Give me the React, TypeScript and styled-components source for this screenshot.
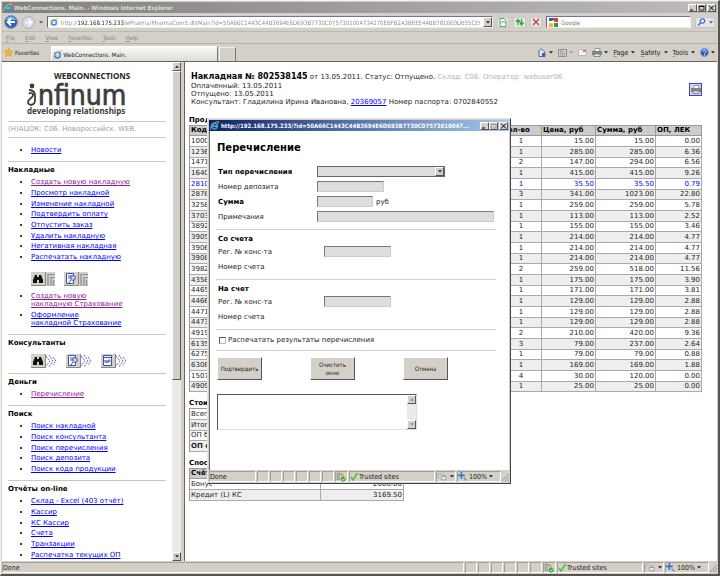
import React from "react";
import styled, { createGlobalStyle, css } from "styled-components";

const UI = `"DejaVu Sans Condensed", "DejaVu Sans", sans-serif`;
const BODY = `"DejaVu Sans", Verdana, sans-serif`;
const FACE = "#d4d0c8";

const Global = createGlobalStyle`
  * { box-sizing: border-box; }
  body { margin: 0; font-family: ${BODY}; font-size: 7px; color: #222; background: ${FACE}; }
  h1, h2, h3, p, ul { margin: 0; padding: 0; }
  button, input, select, textarea { font: inherit; margin: 0; padding: 0; border-radius: 0; }
  button { display: flex; align-items: center; justify-content: center; color: inherit; }
  svg { display: block; flex: none; }
`;

const raised = css`
  background: ${FACE};
  border: 1px solid;
  border-color: #fff #555 #555 #fff;
`;

/* ---------- window frame ---------- */

const Window = styled.div`
  position: relative;
  display: flex;
  flex-direction: column;
  height: 100vh;
  background: ${FACE};
  border: solid;
  border-width: 1px 2px 2px 1px;
  border-color: #f4f2ee #555 #555 #f4f2ee;
  padding: 1px;
  overflow: hidden;
`;

const TitleBar = styled.header<{ $active?: boolean }>`
  display: flex;
  align-items: center;
  gap: 2px;
  flex: none;
  height: 11px;
  padding: 0 1px;
  font-family: ${UI};
  font-weight: bold;
  color: ${(p) => (p.$active ? "#fff" : "#dedbd5")};
  background: ${(p) =>
    p.$active ? "linear-gradient(90deg, #0a246a, #a6caf0)" : "linear-gradient(90deg, #808080, #bcbcbc)"};
`;

const TitleText = styled.span`
  flex: 1;
  min-width: 0;
  overflow: hidden;
  white-space: nowrap;
  text-overflow: ellipsis;
  font-size: 6px;
`;

const Caption = styled.button`
  ${raised}
  width: 9px;
  height: 8px;
  color: #000;
`;

const CaptionGroup = styled.div`
  display: flex;
  & > :last-child { margin-left: 1px; }
`;

const IELogo = ({ size = 9 }: { size?: number }) => (
  <svg width={size} height={size} viewBox="0 0 16 16" aria-hidden="true">
    <circle cx="8" cy="9" r="5" fill="none" stroke="#2f8fe0" strokeWidth="3" />
    <path d="M5 9h8" stroke="#8fd0ff" strokeWidth="2" />
    <path d="M1 15C-1 11 7 2 15 1c1 1 0 3-1 4" fill="none" stroke="#f2b92c" strokeWidth="1.6" />
  </svg>
);

const Captions = ({ muted }: { muted?: boolean }) => (
  <CaptionGroup>
    <Caption aria-label="Minimize">
      <svg width="7" height="6" viewBox="0 0 7 6"><path d="M1 5h3" stroke="#000" /></svg>
    </Caption>
    <Caption aria-label="Maximize">
      <svg width="7" height="6" viewBox="0 0 7 6">
        <path d="M1 1h5v4H1zM1 1.5h5" fill="none" stroke={muted ? "#999" : "#000"} strokeWidth=".8" />
      </svg>
    </Caption>
    <Caption aria-label="Close">
      <svg width="7" height="6" viewBox="0 0 7 6"><path d="M1 .5l5 5M6 .5l-5 5" stroke="#000" /></svg>
    </Caption>
  </CaptionGroup>
);

const Caret = ({ color = "#222", up = false }: { color?: string; up?: boolean }) => (
  <svg width="4" height="3" viewBox="0 0 5 3" aria-hidden="true">
    <path d={up ? "M0 3h5L2.500.2z" : "M0 0h5L2.500 2.800z"} fill={color} />
  </svg>
);

/* ---------- toolbars ---------- */

const AddressRow = styled.div`
  display: flex;
  align-items: center;
  flex: none;
  height: 19px;
  padding: 0 2px;
  gap: 4px;
  border-bottom: 1px solid #bdb9b0;
`;

const NavButton = styled.button`
  border: 0;
  background: none;
`;

const Field = styled.div<{ $grow: number }>`
  display: flex;
  align-items: center;
  gap: 3px;
  flex: ${(p) => p.$grow} 1 0;
  min-width: 0;
  height: 12px;
  padding-left: 2px;
  background: #fff;
  border: 1px solid;
  border-color: #777 #eee #eee #666;
`;

const FieldInput = styled.input`
  flex: 1;
  min-width: 0;
  height: 10px;
  border: 0;
  outline: 0;
  background: transparent;
  font-family: ${UI};
  font-size: 6px;
  color: #777;
  &::placeholder { color: #777; opacity: 1; }
`;

const AddressInput = styled(FieldInput)`
  color: transparent;
  background: linear-gradient(90deg, #888 17px, #222 17px, #222 63px, #888 63px);
  background-clip: text;
  -webkit-background-clip: text;
`;

const DropButton = styled.button`
  ${raised}
  width: 9px;
  height: 100%;
  flex: none;
`;

const FlatButton = styled.button`
  height: 11px;
  min-width: 11px;
  padding: 0 1px;
  gap: 3px;
  background: #e8e6e1;
  border: 1px solid #c4c8cc;
`;

const MenuRow = styled.nav`
  display: flex;
  align-items: center;
  flex: none;
  height: 12px;
  padding-left: 4px;
  gap: 10px;
  color: #8a8782;
  border-bottom: 1px solid #b6b2a9;
`;

const PlainButton = styled.button<{ $compact?: boolean }>`
  border: 0;
  background: none;
  gap: ${(p) => (p.$compact ? 2 : 3)}px;
  font-family: ${UI};
  font-size: ${(p) => (p.$compact ? 6 : 7)}px;
  white-space: nowrap;
`;

const Mnemonic = styled.u`
  text-decoration-color: #999;
`;

const TabRow = styled.div`
  display: flex;
  align-items: center;
  flex: none;
  height: 18px;
  padding: 0 2px;
  border-bottom: 1px solid #666;
`;

const Tab = styled.button`
  align-self: flex-end;
  justify-content: flex-start;
  width: 167px;
  height: 15px;
  gap: 1px;
  margin-left: 12px;
  padding-left: 1px;
  font-family: ${UI};
  font-size: 6px;
  border: solid;
  border-width: 1px 1px 0;
  border-color: #fff #777 #fff #fff;
  background: linear-gradient(#fbfaf9, #dedbd5);
`;

const NewTab = styled.button`
  align-self: flex-end;
  width: 17px;
  height: 14px;
  margin-left: 1px;
  border: solid;
  border-width: 1px 1px 0;
  border-color: #eee #777 #eee #eee;
  background: ${FACE};
`;

const Commands = styled.div`
  display: flex;
  align-items: center;
  gap: 5px;
  margin-left: auto;
`;

/* ---------- panes ---------- */

const Panes = styled.div`
  display: flex;
  flex: 1;
  min-height: 0;
  background: #fff;
`;

const SidePane = styled.aside`
  display: flex;
  flex: none;
  width: 179px;
  overflow: hidden;
`;

const SideContent = styled.div`
  flex: 1;
  min-width: 0;
  padding: 0 6px;
`;

const Divider = styled.div`
  flex: none;
  width: 4px;
  background: ${FACE};
  border: solid #666;
  border-width: 0 1px 0 0;
`;

const Logo = styled.svg`
  margin: 10px 0 3px 17px;
`;

const Section = styled.section`
  border-top: 1px solid #c8c8c8;
  padding: 3px 0 5px;
`;

const Station = styled.p`
  border-top: 1px solid #c8c8c8;
  line-height: 15px;
  color: #a0a0a0;
`;

const SideHeading = styled.h3`
  font-size: 7px;
  line-height: 11px;
  color: #000;
  margin-bottom: 1px;
`;

const List = styled.ul<{ $wide?: boolean }>`
  padding-left: 23px;
  color: #000;
  li { line-height: ${(p) => (p.$wide ? 8 : 11)}px; }
  li:nth-child(3n) { line-height: 10px; }
  li + li { margin-top: ${(p) => (p.$wide ? 3 : 0)}px; }
  margin-bottom: ${(p) => (p.$wide ? 2 : 0)}px;
`;

const SoloList = styled(List)`
  padding-top: 4px;
`;

const Link = styled.a<{ $visited?: boolean }>`
  color: ${(p) => (p.$visited ? "#8b1a92" : "#0000ff")};
`;

const IconRow = styled.div<{ $top: number; $bottom?: number; $gap: number }>`
  display: flex;
  gap: ${(p) => p.$gap}px;
  padding-left: 23px;
  margin: ${(p) => p.$top}px 0 ${(p) => p.$bottom ?? 0}px;
`;

const IconButton = styled.button`
  border: 0;
  background: none;
  height: 14px;
`;

const ScrollTrack = styled.div`
  display: flex;
  flex-direction: column;
  flex: none;
  width: 9px;
  background: #eceae6;
`;

const ScrollButton = styled.button`
  ${raised}
  width: 9px;
  height: 9px;
  flex: none;
`;

const ScrollThumb = styled.div`
  ${raised}
  flex: 64;
`;

const ScrollRest = styled.div`
  flex: 36;
`;

const Scrollbar = ({ thumb, color }: { thumb?: boolean; color?: string }) => (
  <ScrollTrack>
    <ScrollButton type="button" aria-label="Scroll up"><Caret up color={color} /></ScrollButton>
    {thumb && <ScrollThumb />}
    <ScrollRest />
    <ScrollButton type="button" aria-label="Scroll down"><Caret color={color} /></ScrollButton>
  </ScrollTrack>
);

const Main = styled.main`
  flex: 1;
  min-width: 0;
  padding: 10px 15px 0 4px;
  overflow: hidden;
`;

const InvoiceHead = styled.div`
  display: flex;
  justify-content: space-between;
  align-items: center;
  padding: 0 0 3px 2px;
`;

const InvoiceTitle = styled.h1`
  font-size: 7px;
  line-height: 9px;
  font-weight: normal;
  strong { font-size: 8px; color: #000; }
`;

const Muted = styled.span`
  color: #b4b4b4;
`;

const Line = styled.p`
  line-height: 8px;
`;

const PrintButton = styled.button`
  width: 13px;
  height: 13px;
  flex: none;
  border: 1px solid #3b3bf0;
  background: #d8d6da;
`;

const TableTitle = styled.h2`
  font-size: 7px;
  line-height: 9px;
  margin-top: 7px;
  color: #000;
`;

const Table = styled.table<{ $narrow?: boolean }>`
  width: ${(p) => (p.$narrow ? "215px" : "100%")};
  table-layout: fixed;
  border-collapse: separate;
  border-spacing: 0;
  border-top: 1px solid #999;
  border-left: 1px solid #999;
  tbody tr:nth-child(even) { background: #eee; }
  tbody tr:nth-child(3n) { line-height: 9px; }
`;

const Row = styled.tr<{ $accent?: boolean; $bold?: boolean }>`
  line-height: 10px;
  color: ${(p) => (p.$accent ? "#0000ff" : "#222")};
  font-weight: ${(p) => (p.$bold ? "bold" : "normal")};
`;

const Th = styled.th<{ $w?: number }>`
  width: ${(p) => (p.$w ? `${p.$w}px` : "auto")};
  padding: 0 1px;
  line-height: 9px;
  text-align: left;
  white-space: nowrap;
  color: #000;
  background: #ccc;
  border: solid #999;
  border-width: 0 1px 1px 0;
`;

const Td = styled.td<{ $align?: string }>`
  padding: 0 1px;
  text-align: ${(p) => p.$align ?? "left"};
  white-space: nowrap;
  border: solid #aaa;
  border-width: 0 1px 1px 0;
`;

/* ---------- status bar ---------- */

const Status = styled.footer`
  display: flex;
  flex: none;
  height: 12px;
  gap: 1px;
  padding-top: 1px;
  font-family: ${UI};
  background: ${FACE};
`;

const Cell = styled.div<{ $w?: number; $gap?: number }>`
  display: flex;
  align-items: center;
  gap: ${(p) => p.$gap ?? 0}px;
  flex: ${(p) => (p.$w ? `0 0 ${p.$w}px` : "1")};
  border: 1px solid;
  border-color: #a5a199 #fff #fff #a5a199;
`;

const StatusBar = () => (
  <Status>
    <Cell>Done</Cell>
    {[0, 1, 2, 3, 4, 5].map((i) => <Cell key={i} $w={12} />)}
    <Cell $w={13}>
      <svg width="10" height="10" viewBox="0 0 9 9">
        <path d="M1 1h2v6H1zM4 2h2v3" fill="#bbb" stroke="#888" strokeWidth=".7" />
        <path d="M4 1l3 3" stroke="#d9a02c" />
        <circle cx="6.500" cy="6.500" r="2.200" fill="#2fae35" />
        <path d="M5.500 6.500l1 1 1.200-2" fill="none" stroke="#fff" strokeWidth=".7" />
      </svg>
    </Cell>
    <Cell $w={86} $gap={1}>
      <svg width="8" height="9" viewBox="0 0 8 9">
        <path d="M1 5l2 3 4.500-7" fill="none" stroke="#48c83c" strokeWidth="1.600" />
      </svg>
      Trusted sites
    </Cell>
    <Cell $w={20} $gap={3}>
      <svg width="10" height="9" viewBox="0 0 9 8">
        <path d="M1 5V2h3M5 4V2.500h2V4M4 4h4v3H4z" fill="#eee" stroke="#999" strokeWidth=".8" />
      </svg>
      <Caret />
    </Cell>
    <Cell $w={44} $gap={2}>
      <svg width="9" height="9" viewBox="0 0 8 8">
        <path d="M3 0v6M0 3h6" stroke="#2a77d8" strokeWidth="1.400" />
        <path d="M5 5l2.500 2.500" stroke="#888" strokeWidth="1.200" />
      </svg>
      100%
      <Caret />
    </Cell>
    <svg width="7" height="10" viewBox="0 0 7 10">
      <path d="M0 10l7-7M3 10l4-4M5.500 10L7 8.500" stroke="#888" strokeWidth=".8" />
    </svg>
  </Status>
);

/* ---------- dialog ---------- */

const Popup = styled.div`
  position: absolute;
  left: 206px;
  top: 117px;
  display: flex;
  flex-direction: column;
  width: 304px;
  height: 366px;
  padding: 1px;
  background: ${FACE};
  border: 1px solid;
  border-color: #e8e5df #444 #444 #e8e5df;
`;

const Form = styled.form`
  flex: 1;
  padding: 10px 13px 0 6px;
  background: #fff;
  border-left: 1px solid #666;
`;

const FormTitle = styled.h2`
  font-size: 10px;
  line-height: 14px;
  margin: 0 0 11px 1px;
  color: #000;
`;

const Rows = styled.div<{ $indent?: boolean }>`
  display: grid;
  grid-template-columns: ${(p) => (p.$indent ? 108 : 101)}px 1fr;
  grid-auto-rows: 11px;
  row-gap: 4px;
  align-items: center;
  padding-bottom: 7px;
`;

const Label = styled.label<{ $bold?: boolean }>`
  padding-left: 2px;
  font-weight: ${(p) => (p.$bold ? "bold" : "normal")};
  color: ${(p) => (p.$bold ? "#000" : "#222")};
`;

const Group = styled.section`
  border-top: 1px solid #d0d0d0;
`;

const GroupTitle = styled.h3`
  font-size: 7px;
  line-height: 9px;
  margin: 5px 0 2px 2px;
  color: #000;
`;

const sunken = css`
  height: 11px;
  border: solid;
  border-width: 1px;
  border-color: #777 #ccc #ccc #777;
  background-color: #ddd;
`;

const TextBox = styled.input<{ $w: number }>`
  ${sunken}
  width: ${(p) => p.$w}px;
`;

const SelectFrame = styled.div`
  ${sunken}
  display: flex;
  width: 128px;
  border-color: #666;
`;

const Select = styled.select`
  appearance: none;
  flex: 1;
  min-width: 0;
  border: 0;
  background: transparent;
`;

const Inline = styled.div`
  display: flex;
  align-items: center;
  gap: 3px;
`;

const CheckRow = styled.div`
  display: flex;
  align-items: center;
  height: 20px;
  padding-left: 3px;
`;

const Check = styled.input`
  appearance: none;
  width: 7px;
  height: 7px;
  border: 1px solid;
  border-color: #555 #bbb #bbb #555;
  background: #fff;
`;

const Actions = styled.div`
  display: flex;
  gap: 48px;
  padding: 6px 0 14px 1px;
  border-top: 1px solid #d0d0d0;
`;

const PushButton = styled.button`
  ${raised}
  width: 45px;
  height: 23px;
  font-family: ${UI};
  font-size: 6px;
  line-height: 8px;
`;

const Memo = styled.div`
  display: flex;
  width: 200px;
  height: 36px;
  margin-left: 1px;
  border: 1px solid;
  border-color: #555 #ddd #ddd #555;
`;

const MemoInput = styled.textarea`
  flex: 1;
  min-width: 0;
  border: 0;
  outline: 0;
  resize: none;
  overflow: hidden;
  background: #fff;
`;

/* ---------- drawings ---------- */

const Tile = ({ kind, tail }: { kind: "find" | "doc" | "np"; tail: "bars" | "burst" }) => (
  <svg width={tail === "bars" ? 24 : 26} height="14" viewBox={tail === "bars" ? "0 0 24 14" : "0 0 26 14"}>
    <path d={tail === "bars" ? "M0 0h24v14H0z" : "M0 0h15v14H0z"} fill="#d4d0c8" />
    <path d="M0 13.500h14.500V0" fill="none" stroke="#888" />
    {kind === "find" && (
      <path d="M2 11V8l2-5h2v2h2V3h2l2 5v3H8V8H6v3z" fill="#111" />
    )}
    {kind === "doc" && (
      <g fill="none" stroke="#3c4fb5">
        <path d="M2.500 1.500h7v10h-7zM4 4h4M4 6h3" fill="#fff" />
        <circle cx="9" cy="6" r="2.300" fill="#cfd6f5" />
        <path d="M7 8l-3 4" />
      </g>
    )}
    {kind === "np" && (
      <g fill="none" stroke="#3c4fb5">
        <path d="M2.500 1.500h8v10h-8zM3 3.500h7" fill="#fff" />
        <path d="M4 9V6l2 3V6M7 9V6h2v1.500H7" strokeWidth=".8" />
      </g>
    )}
    {tail === "bars" ? (
      <path d="M17 14V2.500h7M20 14V5.500h4M22.500 14V8" fill="none" stroke="#8d8d8d" strokeWidth="1.200" />
    ) : (
      <g fill="none" stroke="#5560b8" strokeDasharray="2 1">
        <path d="M15 2l4 5-4 5M18 1l4 6-4 6M22 3l3 4-3 4" />
      </g>
    )}
  </svg>
);

const Printer = () => (
  <svg width="10" height="9" viewBox="0 0 10 9">
    <path d="M2.500 3.500L3.500.5h4.500l-.5 3" fill="#fff" stroke="#777" strokeWidth=".7" />
    <path d="M.5 3.500h9v3h-9z" fill="#8a8d90" stroke="#666" strokeWidth=".7" />
    <path d="M2 6h6v2.500H2z" fill="#e6eaf0" stroke="#666" strokeWidth=".7" />
  </svg>
);

const BrandLogo = () => (
  <Logo width="112" height="46" viewBox="0 0 112 46" role="img" aria-label="WEBCONNECTIONS infinum developing relationships">
    <g fill="#3c3c3c" fontFamily="DejaVu Sans Condensed, DejaVu Sans, sans-serif">
      <text x="29" y="7" fontSize="8" fontWeight="bold" fontFamily="Open Sans, sans-serif" fill="#222">WEBCONNECTIONS</text>
      <text x="13" y="33" fontSize="28" stroke="#3c3c3c" strokeWidth=".7">nfinum</text>
      <text x="2" y="42" fontSize="8" fontWeight="bold" fontFamily="Noto Sans, sans-serif">developing relationships</text>
    </g>
    <g fill="none" stroke="#3c3c3c">
      <circle cx="7" cy="14" r="2.400" fill="#3c3c3c" stroke="none" />
      <path d="M4 18c4 0 6 2 6 6v4c0 6-7 6-7 2 0-3 5-4 5-7 0-2-3-3-4-1" strokeWidth="1.800" />
    </g>
  </Logo>
);

/* ---------- data ---------- */

const goods = `1000 1 15.00 15.00 0.00
1236 1 285.00 285.00 6.36
1471 2 147.00 294.00 6.56
1640 1 415.00 415.00 9.26
2810 1 35.50 35.50 0.79
2878 3 341.00 1023.00 22.80
3258 1 259.00 259.00 5.78
3703 1 113.00 113.00 2.52
3892 1 155.00 155.00 3.46
3905 1 214.00 214.00 4.77
3906 1 214.00 214.00 4.77
3908 1 214.00 214.00 4.77
3982 2 259.00 518.00 11.56
4358 1 175.00 175.00 3.90
4465 1 171.00 171.00 3.81
4466 1 129.00 129.00 2.88
4471 1 129.00 129.00 2.88
4473 1 129.00 129.00 2.88
4919 2 210.00 420.00 9.36
6135 3 79.00 237.00 2.64
6275 1 79.00 79.00 0.88
6308 1 169.00 169.00 1.88
1507 4 30.00 120.00 0.00
4909 1 25.00 25.00 0.00`.split("\n").map((l) => l.split(" "));

const invoiceLinks = [
  "Создать новую накладную", "Просмотр накладной", "Изменение накладной", "Подтвердить оплату",
  "Отпустить заказ", "Удалить накладную", "Негативная накладная", "Распечатать накладную",
];
const searchLinks = ["Поиск накладной", "Поиск консультанта", "Поиск перечисления", "Поиск депозита", "Поиск кода продукции"];
const reportLinks = ["Склад - Excel (403 отчёт)", "Кассир", "КС Кассир", "Счета", "Транзакции", "Распечатка текущих ОП"];

const Links = ({ items, visited }: { items: string[]; visited?: string }) => (
  <List>
    {items.map((t) => (
      <li key={t}><Link href="#" $visited={t === visited}>{t}</Link></li>
    ))}
  </List>
);

const TransferDialog = () => (
  <Popup role="dialog" aria-label="Перечисление">
    <TitleBar $active>
      <IELogo />
      <TitleText>http://192.168.175.233/?id=50A66C1443C44B3694E6D693B7730C07573010047...</TitleText>
      <Captions muted />
    </TitleBar>
    <Form onSubmit={(e) => e.preventDefault()}>
      <FormTitle>Перечисление</FormTitle>
      <Rows>
        <Label $bold htmlFor="kind">Тип перечисления</Label>
        <SelectFrame>
          <Select id="kind" />
          <DropButton type="button" aria-label="Открыть список"><Caret /></DropButton>
        </SelectFrame>
        <Label htmlFor="deposit">Номер депозита</Label>
        <TextBox id="deposit" $w={67} />
        <Label $bold htmlFor="sum">Сумма</Label>
        <Inline><TextBox id="sum" $w={56} />руб</Inline>
        <Label htmlFor="notes">Примечания</Label>
        <TextBox id="notes" $w={177} />
      </Rows>
      {["Со счета", "На счет"].map((title, i) => (
        <Group key={title}>
          <GroupTitle>{title}</GroupTitle>
          <Rows $indent>
            <Label htmlFor={`reg${i}`}>Рег. № конс-та</Label>
            <TextBox id={`reg${i}`} $w={67} />
            <Label as="span">Номер счета</Label>
          </Rows>
        </Group>
      ))}
      <Group>
        <CheckRow>
          <Check type="checkbox" id="print" />
          <Label htmlFor="print">Распечатать результаты перечисления</Label>
        </CheckRow>
      </Group>
      <Actions>
        <PushButton>Подтвердить</PushButton>
        <PushButton type="reset">Очистить<br />окно</PushButton>
        <PushButton type="button">Отмена</PushButton>
      </Actions>
      <Memo>
        <MemoInput aria-label="Сообщения" />
        <Scrollbar color="#888" />
      </Memo>
    </Form>
    <StatusBar />
  </Popup>
);

export default function App() {
  return (
    <Window>
      <Global />
      <TitleBar>
        <IELogo />
        <TitleText>WebConnections. Main. - Windows Internet Explorer</TitleText>
        <Captions />
      </TitleBar>

      <AddressRow>
        <NavButton aria-label="Back">
          <svg width="14" height="14" viewBox="0 0 14 14">
            <circle cx="7" cy="7" r="6.500" fill="#2b62b8" stroke="#8fa3c0" />
            <path d="M2 5a5.300 5.300 0 0 1 10 0" fill="#7fb0ea" />
            <path d="M7 3.500L3.500 7 7 10.500M4 7h7" fill="none" stroke="#fff" strokeWidth="1.800" />
          </svg>
        </NavButton>
        <NavButton aria-label="Forward">
          <svg width="13" height="13" viewBox="0 0 13 13">
            <circle cx="6.500" cy="6.500" r="6" fill="#d5dce6" stroke="#a9b2be" />
            <path d="M6.500 3.500l3 3-3 3M9 6.500H3" fill="none" stroke="#fff" strokeWidth="1.600" />
          </svg>
        </NavButton>
        <NavButton aria-label="Recent pages"><Caret color="#27599c" /></NavButton>
        <Field $grow={455}>
          <IELogo size={8} />
          <AddressInput
            aria-label="Address"
            defaultValue="http://192.168.175.233/ePharma/PharmaCom5.dll/Main?id=50A66C1443C44B3694E6D693B7730C0757301004734270EBFB2A3BEEE44BB7816E0DB55CE95C21F0A4"
          />
          <DropButton aria-label="Show address list"><Caret /></DropButton>
        </Field>
        <FlatButton aria-label="Compatibility view">
          <svg width="8" height="9" viewBox="0 0 8 9"><path d="M1 .5h4L7 3v5.500H1zM1 5l3-1.500L7 5" fill="#fff" stroke="#58a868" /></svg>
        </FlatButton>
        <FlatButton aria-label="Refresh">
          <svg width="9" height="8" viewBox="0 0 9 8"><path d="M3 7V2M1 4l2-2.500L5 4M6.500 1v5M5 4.500L6.500 7 8.500 4.500" fill="none" stroke="#2fa33a" strokeWidth="1.300" /></svg>
        </FlatButton>
        <FlatButton aria-label="Stop">
          <svg width="8" height="8" viewBox="0 0 8 8"><path d="M1 1l6 6M7 1L1 7" stroke="#d0393b" strokeWidth="1.300" /></svg>
        </FlatButton>
        <Field $grow={145}>
          <svg width="9" height="9" viewBox="0 0 9 9">
            <path d="M0 0h5v3H0z" fill="#2d57c8" /><path d="M5 0h4v4H5z" fill="#d93a2b" />
            <path d="M0 5h4v4H0z" fill="#f0b91e" /><path d="M5 5h4v4H5z" fill="#2c9a45" />
            <circle cx="4" cy="4" r="1.700" fill="#fff" />
          </svg>
          <FieldInput aria-label="Search" placeholder="Google" />
        </Field>
        <FlatButton aria-label="Go">
          <svg width="9" height="8" viewBox="0 0 9 8">
            <circle cx="5.500" cy="3" r="2.200" fill="#e8f1fd" stroke="#3472d6" strokeWidth="1.200" />
            <path d="M4 4.500L1 7.500" stroke="#3472d6" strokeWidth="1.400" />
          </svg>
          <Caret color="#2a62b8" />
        </FlatButton>
      </AddressRow>

      <MenuRow>
        {["File", "Edit", "View", "Favorites", "Tools", "Help"].map((m) => (
          <PlainButton $compact key={m}><span><Mnemonic>{m[0]}</Mnemonic>{m.slice(1)}</span></PlainButton>
        ))}
      </MenuRow>

      <TabRow>
        <PlainButton $compact>
          <svg width="9" height="9" viewBox="0 0 10 10"><path d="M5 .3l1.400 3.100 3.400.4-2.500 2.300.7 3.400L5 7.800 2 9.500l.7-3.400L.2 3.800l3.400-.4z" fill="#f7b82e" stroke="#d98f16" strokeWidth=".6" /></svg>
          Favorites
        </PlainButton>
        <Tab><IELogo />WebConnections. Main.</Tab>
        <NewTab aria-label="New tab" />
        <Commands>
          <PlainButton $compact aria-label="Home">
            <svg width="10" height="9" viewBox="0 0 10 9"><path d="M1 4l3.500-3L8 4v4.500H2V4" fill="#dfe7f3" stroke="#4a6fb0" /><path d="M5 5h3v3.500H5z" fill="#3d64b4" /></svg>
            <Caret />
          </PlainButton>
          <PlainButton $compact aria-label="Feeds">
            <svg width="9" height="8" viewBox="0 0 9 8"><path d="M.5.5h8v7h-8zM2 6h1M2 4c1.500 0 2.500 1 2.500 2.500M2 2c3 0 4.500 2 4.500 4.500" fill="none" stroke="#888" strokeWidth=".9" /></svg>
            <Caret color="#999" />
          </PlainButton>
          <PlainButton $compact aria-label="Mail">
            <svg width="9" height="7" viewBox="0 0 9 7"><path d="M.5.5h8v6h-8z" fill="#f6f4f2" stroke="#bbb" /><path d="M5 1h3v2H5z" fill="#dd7777" /></svg>
          </PlainButton>
          <PlainButton $compact aria-label="Print"><Printer /><Caret /></PlainButton>
          {["Page", "Safety", "Tools"].map((m) => (
            <PlainButton key={m}><span><Mnemonic>{m[0]}</Mnemonic>{m.slice(1)}</span><Caret /></PlainButton>
          ))}
          <PlainButton $compact aria-label="Help">
            <svg width="9" height="9" viewBox="0 0 9 9">
              <circle cx="4.500" cy="4.500" r="4" fill="#2a58b8" stroke="#8aa4d0" />
              <path d="M3 3.500c0-2 3-2 3 0 0 1-1.500 1-1.500 2M4.500 6.500v1" fill="none" stroke="#fff" />
            </svg>
            <Caret />
          </PlainButton>
        </Commands>
      </TabRow>

      <Panes>
        <SidePane>
          <SideContent>
            <BrandLogo />
            <Station>(Н)АЦОК: С06. Новороссийск. WEB.</Station>
            <Section>
              <SoloList><li><Link href="#">Новости</Link></li></SoloList>
            </Section>
            <Section>
              <SideHeading>Накладные</SideHeading>
              <Links items={invoiceLinks} visited="Создать новую накладную" />
              <IconRow $top={9} $bottom={6} $gap={9}>
                <IconButton aria-label="Найти накладную"><Tile kind="find" tail="bars" /></IconButton>
                <IconButton aria-label="Просмотр документа"><Tile kind="doc" tail="bars" /></IconButton>
              </IconRow>
              <List $wide>
                <li><Link href="#" $visited>Создать новую<br />накладную Страхование</Link></li>
                <li><Link href="#">Оформление<br />накладной Страхование</Link></li>
              </List>
            </Section>
            <Section>
              <SideHeading>Консультанты</SideHeading>
              <IconRow $top={5} $gap={9}>
                <IconButton aria-label="Найти консультанта"><Tile kind="find" tail="burst" /></IconButton>
                <IconButton aria-label="Карточка консультанта"><Tile kind="doc" tail="burst" /></IconButton>
                <IconButton aria-label="Новый консультант"><Tile kind="np" tail="burst" /></IconButton>
              </IconRow>
            </Section>
            <Section>
              <SideHeading>Деньги</SideHeading>
              <Links items={["Перечисление"]} visited="Перечисление" />
            </Section>
            <Section>
              <SideHeading>Поиск</SideHeading>
              <Links items={searchLinks} />
            </Section>
            <Section>
              <SideHeading>Отчёты on-line</SideHeading>
              <Links items={reportLinks} />
            </Section>
          </SideContent>
          <Scrollbar thumb />
        </SidePane>
        <Divider />
        <Main>
          <InvoiceHead>
            <div>
              <InvoiceTitle>
                <strong>Накладная № 802538145</strong> от 13.05.2011. Статус: Отпущено.{" "}
                <Muted>Склад: С06. Оператор: webuser06</Muted>
              </InvoiceTitle>
              <Line>Оплаченный: 13.05.2011</Line>
              <Line>Отпущено: 13.05.2011</Line>
              <Line>
                Консультант: Гладилина Ирина Ивановна, <Link href="#">20369057</Link> Номер паспорта: 0702840552
              </Line>
            </div>
            <PrintButton aria-label="Печать"><Printer /></PrintButton>
          </InvoiceHead>

          <TableTitle>Продукция</TableTitle>
          <Table>
            <thead>
              <Row>
                <Th>Код</Th>
                <Th $w={41}>Кол-во</Th>
                <Th $w={54}>Цена, руб</Th>
                <Th $w={60}>Сумма, руб</Th>
                <Th $w={46}>ОП, ЛЕК</Th>
              </Row>
            </thead>
            <tbody>
              {goods.map(([code, qty, price, sum, points]) => (
                <Row key={code} $accent={code === "2810"}>
                  <Td>{code}</Td>
                  <Td $align="center">{qty}</Td>
                  <Td $align="right">{price}</Td>
                  <Td $align="right">{sum}</Td>
                  <Td $align="right">{points}</Td>
                </Row>
              ))}
            </tbody>
          </Table>

          <TableTitle>Стоимость</TableTitle>
          <Table $narrow>
            <tbody>
              <Row><Td>Всего</Td></Row>
              <Row><Td>Итого</Td></Row>
              <Row><Td>ОП без скидки</Td></Row>
              <Row $bold><Td>ОП со скидкой</Td></Row>
            </tbody>
          </Table>

          <TableTitle>Способ оплаты</TableTitle>
          <Table $narrow>
            <thead>
              <Row><Th>Счёт</Th><Th $w={83}>Сумма</Th></Row>
            </thead>
            <tbody>
              <Row><Td>Бонус</Td><Td $align="right">2000.00</Td></Row>
              <Row><Td>Кредит (L) КС</Td><Td $align="right">3169.50</Td></Row>
            </tbody>
          </Table>
        </Main>
      </Panes>
      <StatusBar />
      <TransferDialog />
    </Window>
  );
}
